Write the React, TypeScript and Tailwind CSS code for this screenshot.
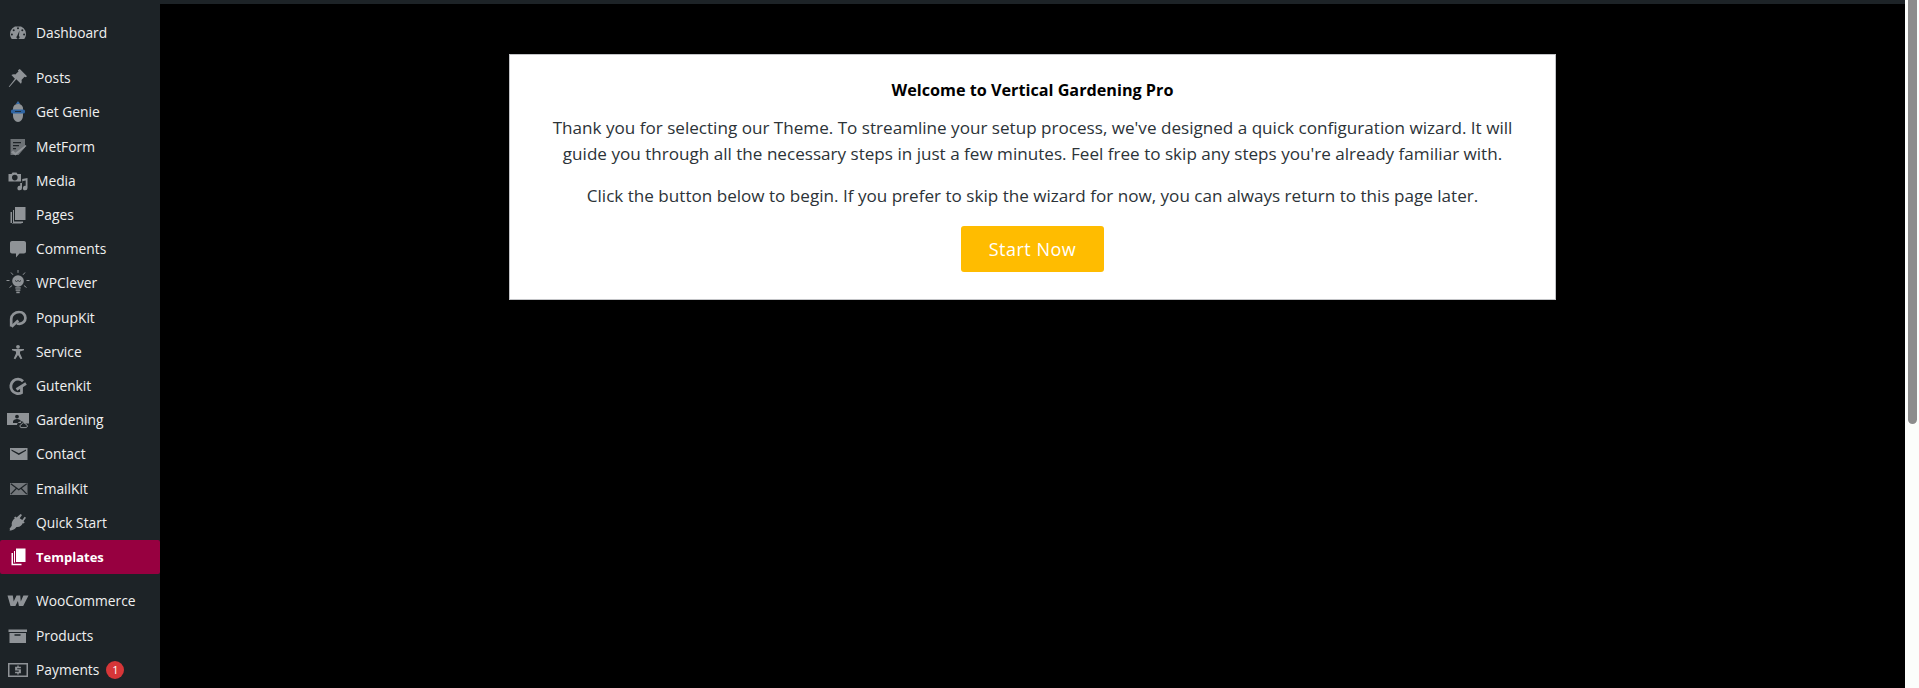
import type { ReactNode } from "react";

// Iconos del menú lateral, dibujados a mano (viewBox 20x20).
const ICONS: Record<string, ReactNode> = {
  dashboard: (
    <path
      fillRule="evenodd"
      d="M10 3a8 8 0 0 0-8 8c0 2 .7 3.700 1.800 5h12.400c1.100-1.300 1.800-3 1.800-5a8 8 0 0 0-8-8zM10 4.300a1 1 0 1 1 0 2 1 1 0 0 1 0-2zM5.700 6.200a1 1 0 1 1 0 2 1 1 0 0 1 0-2zM14.300 6.200a1 1 0 1 1 0 2 1 1 0 0 1 0-2zM3.900 10.500a1 1 0 1 1 0 2 1 1 0 0 1 0-2zM16.100 10.500a1 1 0 1 1 0 2 1 1 0 0 1 0-2zM11.500 7.500l-.6 5.400a1.600 1.600 0 1 1-1.800 0z"
    />
  ),
  pin: (
    <path d="M11.800 1l7.200 7.200-1.300 1.100-1.200-.6-3 3.200c.5 1.400.2 2.800-.6 3.900L8.300 11.200 1.500 19l-.8-.2 6.200-8.100-3.500-3.600c1.100-.9 2.600-1.100 3.900-.6l3.200-3-.6-1.200z" />
  ),
  genie: (
    <>
      <path d="M10-1l2.200 3H7.800z" fill="#3a6ea8" />
      <path d="M10 2c3 0 5 2 5 4.500v7c0 3.500-2.200 6.500-5 6.500s-5-3-5-6.500v-7C5 4 7 2 10 2z" />
      <rect x="3" y="7.500" width="14" height="4" rx="1.500" fill="#2f65a3" />
      <path d="M7 9.500h6" stroke="#1d2327" strokeWidth=".8" />
    </>
  ),
  metform: (
    <>
      <path d="M2.500 2H17v8.500L10.500 18H2.500z" opacity=".7" />
      <path d="M5 5h8v1.300H5zM5 8h6v1.300H5zM5 11h3v1.300H5z" fill="#1d2327" />
      <path d="M3 15.500l2-2 2.500 2.300L17.500 8l1 .9L7.500 18.500z" />
    </>
  ),
  media: (
    <path
      fillRule="evenodd"
      d="M.5 3h3l1-1.500h4L9.500 3h3.500v7.500H.5zM6.800 3.800a2.800 2.800 0 1 0 0 5.600 2.800 2.800 0 0 0 0-5.600zM19.500 7v10a2.300 2.300 0 1 1-1.800-2.200V9.500l-3.700.8v6.700a2.300 2.300 0 1 1-1.800-2.200V12h2V8z"
    />
  ),
  pages: <path d="M7 2h10.500v13H7zM5 5h1v11.500h9v1.500H5zM2.500 7H4v11.500h9.500v-.5H2.500z" />,
  comments: (
    <path d="M4 2h12c1.100 0 2 .9 2 2v8.500c0 1.100-.9 2-2 2h-4.500L8 18.500v-4H4c-1.100 0-2-.9-2-2V4c0-1.100.9-2 2-2z" />
  ),
  bulb: (
    <>
      <circle cx="10" cy="8" r="5.800" />
      <rect x="7.300" y="14.300" width="5.400" height="1.300" />
      <rect x="7.600" y="16.400" width="4.800" height="1.400" />
      <rect x="8.300" y="18.600" width="3.400" height="1.600" />
      <path
        d="M10-3v2.800M3-.5L5 1.800M17-.5L15 1.800M-1.500 7.500h3M18.500 7.500h3M1.500 14.500l2.600-2M18.500 14.500l-2.600-2"
        stroke="currentColor"
        strokeWidth="1"
        fill="none"
      />
      <path d="M7 7.500l1.500 1 1.500-1 1.500 1 1.500-1" stroke="#1d2327" strokeWidth=".8" fill="none" />
    </>
  ),
  popup: (
    <g fill="none" stroke="currentColor" strokeWidth="2.700">
      <path d="M3.200 18.500V11a8 7 0 0 1 8.300-7 5.800 5.800 0 0 1 0 11.800 7 7 0 0 1-2.500-.4" />
      <path d="M3.500 18.800l6.800-6.300" />
    </g>
  ),
  person: (
    <>
      <circle cx="10" cy="4.800" r="1.900" />
      <path d="M4 7h12v1.200l-4 1.400v2l2.300 5-1.600.7L10 13l-2.700 4.300-1.600-.7L8 11.600v-2L4 8.200z" />
    </>
  ),
  gutenkit: (
    <g fill="none" stroke="currentColor" strokeWidth="2.800">
      <path d="M15 5.200a7.200 7.200 0 1 0-1.500 11.500V11" />
      <path d="M8.500 13.500L18 7.500" />
    </g>
  ),
  gardening: (
    <g transform="translate(1 0)">
      <path
        fillRule="evenodd"
        d="M-2 3h22v10.500h-4.500a4 4 0 0 0-7.500 1.500H-2zM8 4.700a1.900 1.900 0 1 0 0 3.800 1.900 1.900 0 0 0 0-3.800zM4 13h8v-1.500c0-1.400-2.200-2.500-4-2.500s-4 1.100-4 2.500z"
      />
      <path
        d="M12.500 14.500a2.200 2.200 0 0 1 4.300 0 1.600 1.600 0 0 1 .5 3.100H12a1.600 1.600 0 0 1 .5-3.100z"
        fill="none"
        stroke="currentColor"
        strokeWidth="1"
      />
    </g>
  ),
  mail: (
    <path fillRule="evenodd" d="M2 4h17.500v12H2zM3.500 5.500v1.300L10.800 11 18 6.800V5.500L10.800 9.300z" />
  ),
  emailkit: (
    <>
      <rect x="2" y="4" width="17.500" height="12" opacity=".75" />
      <path
        d="M2.800 4.800L10.800 10.800l8-6M2.800 15.200L8.300 9.500M18.800 15.200L13.300 9.500"
        stroke="#1d2327"
        strokeWidth="1.200"
        fill="none"
      />
    </>
  ),
  plug: (
    <path d="M12.500 1l1.500 1-2.300 3.300 2.600 1.800 2.300-3.300 1.400 1-2.500 3.500 1.200.9-1 1.300-.8-.5c-1 2-2.700 4.300-6.400 4-1.100 1.300-2 2.700-5.500 3.500h-1.500l.5-1.500-.5-.5c1.300-.8 1.800-2 2.300-3-.5-3 .7-5.500 2.900-7l-.6-.9 1.300-1 1.200.8z" />
  ),
  templates: (
    <path fillRule="evenodd" d="M8 1.500h9.500v13.500H8zM3.500 6H5v10.800h8.500V18.200h-10zM6 4h1v11.500H6z" />
  ),
  woo: (
    <path d="M-.5 4.500h5.300l.9 6 2.800-6h3.700l.6 6 2.600-6h5.100l-5.300 10.500h-4.300l-1-5-2.500 5H2.500z" />
  ),
  products: (
    <path fillRule="evenodd" d="M.5 3.500H19V6H.5zM1.500 7H18v10H1.500zM6.500 8.300v1.500h6V8.300z" />
  ),
  payments: (
    <g transform="translate(1 0)">
      <path fillRule="evenodd" d="M-1 3h20v14H-1zM.5 4.500v11h17v-11z" />
      <path d="M8.300 5.500h1.400v1.200h2.200v1.500H8.200v1.100h3.700v3.900H9.700v1.200H8.300v-1.200H6.100v-1.500h3.700v-1.100H6.100V6.700h2.200z" />
    </g>
  ),
};

type Item = {
  label: string;
  icon: string;
  badge?: string;
  gapClass?: string;
  active?: boolean;
};

const MENU: Item[] = [
  { label: "Dashboard", icon: "dashboard" },
  { label: "Posts", icon: "pin", gapClass: "mt-[11px]" },
  { label: "Get Genie", icon: "genie" },
  { label: "MetForm", icon: "metform" },
  { label: "Media", icon: "media" },
  { label: "Pages", icon: "pages" },
  { label: "Comments", icon: "comments" },
  { label: "WPClever", icon: "bulb" },
  { label: "PopupKit", icon: "popup" },
  { label: "Service", icon: "person" },
  { label: "Gutenkit", icon: "gutenkit" },
  { label: "Gardening", icon: "gardening" },
  { label: "Contact", icon: "mail" },
  { label: "EmailKit", icon: "emailkit" },
  { label: "Quick Start", icon: "plug" },
  { label: "Templates", icon: "templates", active: true },
  { label: "WooCommerce", icon: "woo", gapClass: "mt-[10.4px]" },
  { label: "Products", icon: "products" },
  { label: "Payments", icon: "payments", badge: "1" },
];

function MenuRow({ item }: { item: Item }) {
  return (
    <a
      className={`flex h-[34.2px] items-center rounded-[2px] pl-[8px] leading-[20px] ${
        item.gapClass ?? ""
      } ${item.active ? "bg-[#970040] text-[13px] font-bold text-white" : "text-[13.8px] text-[#f0f0f0]"}`}
    >
      <svg
        viewBox="0 0 20 20"
        fill="currentColor"
        className={`h-[20px] w-[20px] shrink-0 overflow-visible ${
          item.active ? "text-white" : "text-[#8f9397]"
        }`}
      >
        {ICONS[item.icon]}
      </svg>
      <span className="ml-[8px]">{item.label}</span>
      {item.badge && (
        <span className="ml-[7px] flex h-[18px] w-[18px] items-center justify-center rounded-full bg-[#d63638] text-[11px] text-white">
          {item.badge}
        </span>
      )}
    </a>
  );
}

export default function App() {
  return (
    <div className="flex h-[688px] overflow-hidden bg-black font-['Open_Sans','Noto_Sans',sans-serif]">
      <aside className="h-full w-[160px] shrink-0 bg-[#1d2327] pt-[16px]">
        {MENU.map((item) => (
          <MenuRow key={item.label} item={item} />
        ))}
      </aside>
      <div className="flex min-w-0 flex-1 flex-col">
        <div className="h-[4px] shrink-0 bg-[#1d2327]" />
        <main className="flex flex-1 justify-center pt-[50px]">
          <section className="h-[246px] w-[1047px] border border-[#c3c4c7] bg-white pt-[24px] text-center text-[17.1px] text-[#2c3338]">
            <h1 className="text-[16.2px] leading-[22px] font-bold text-black">
              Welcome to Vertical Gardening Pro
            </h1>
            <p className="mt-[14px] leading-[26px]">
              Thank you for selecting our Theme. To streamline your setup process, we've designed a
              quick configuration wizard. It will
              <br />
              guide you through all the necessary steps in just a few minutes. Feel free to skip any
              steps you're already familiar with.
            </p>
            <p className="mt-[16px] leading-[26px]">
              Click the button below to begin. If you prefer to skip the wizard for now, you can
              always return to this page later.
            </p>
            <button className="mt-[17px] h-[46px] w-[143px] rounded-[3px] bg-[#ffbc00] text-[18px] tracking-[0.5px] text-white">
              Start Now
            </button>
          </section>
        </main>
      </div>
      <div className="h-full w-[14px] shrink-0 bg-[#fbfdfb] pl-[3px]">
        <div className="h-[424px] w-[9px] rounded-b-[5px] bg-[#8c8c8c]" />
      </div>
    </div>
  );
}
